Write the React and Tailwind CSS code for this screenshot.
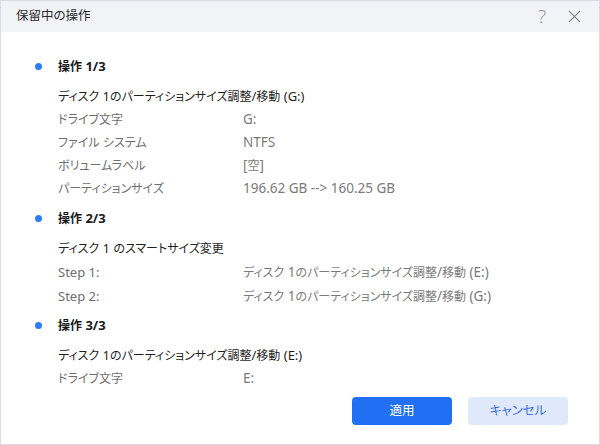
import React from "react";

const font = { fontFamily: '"Noto Sans", "Noto Sans CJK JP", sans-serif' };

function T({ children, latin = "text-[13.5px]" }) {
  const parts = String(children).split(/([\x00-\x7F]+)/).filter((p) => p !== "");
  return (
    <>
      {parts.map((p, i) =>
        /^[\x00-\x7F]+$/.test(p) ? (
          <span key={i} className={latin}>{p}</span>
        ) : (
          <span key={i}>{p}</span>
        )
      )}
    </>
  );
}

function Heading({ children }) {
  return (
    <div className="flex items-center h-[20px]">
      <span className="w-[7px] h-[7px] rounded-full bg-[#2f7cf6] ml-[34px] mr-[16px]" />
      <span className="text-[12px] font-bold text-[#1a1a1a] leading-[20px]">
        <T latin="text-[13px]">{children}</T>
      </span>
    </div>
  );
}

function Sub({ children }) {
  return (
    <div className="mt-[9px] pl-[57px] h-[23px] leading-[23px] text-[12px] text-[#1f1f1f] whitespace-nowrap">
      <T latin="text-[13px]">{children}</T>
    </div>
  );
}

function Row({ label, value }) {
  return (
    <div className="flex h-[23px] leading-[23px] text-[12px] text-[#6e6e6e]">
      <span className="pl-[57px] w-[242px] shrink-0 whitespace-nowrap"><T latin="text-[13px]">{label}</T></span>
      <span className="text-[#7a7a7a] whitespace-nowrap"><T>{value}</T></span>
    </div>
  );
}

export default function App() {
  return (
    <div style={font} className="w-[600px] h-[445px] bg-white border border-[#d8dce4] flex flex-col overflow-hidden [font-feature-settings:'palt']">
      <div className="h-[31px] bg-[#f1f3f7] flex items-center shrink-0">
        <span className="ml-[15px] text-[12.5px] text-[#2a2a2a]">保留中の操作</span>
        <span className="ml-auto text-[19px] font-light text-[#9a9a9a] leading-none mr-[22px]">?</span>
        <svg width="13" height="13" viewBox="0 0 13 13" className="mr-[18px]">
          <path d="M1 1 L12 12 M12 1 L1 12" stroke="#8a8a8a" strokeWidth="1.1" />
        </svg>
      </div>
      <div className="flex-1 overflow-hidden pt-[24px]">
        <Heading>操作 1/3</Heading>
        <Sub>ディスク 1のパーティションサイズ調整/移動 (G:)</Sub>
        <Row label="ドライブ文字" value="G:" />
        <Row label="ファイル システム" value="NTFS" />
        <Row label="ボリュームラベル" value="[空]" />
        <Row label="パーティションサイズ" value="196.62 GB --> 160.25 GB" />
        <div className="mt-[8px]" />
        <Heading>操作 2/3</Heading>
        <Sub>ディスク 1 のスマートサイズ変更</Sub>
        <div className="mt-[1px]" />
        <Row label="Step 1:" value="ディスク 1のパーティションサイズ調整/移動 (E:)" />
        <div className="mt-[1px]" />
        <Row label="Step 2:" value="ディスク 1のパーティションサイズ調整/移動 (G:)" />
        <div className="mt-[7px]" />
        <Heading>操作 3/3</Heading>
        <Sub>ディスク 1のパーティションサイズ調整/移動 (E:)</Sub>
        <Row label="ドライブ文字" value="E:" />
      </div>
      <div className="h-[54px] shrink-0 flex justify-end items-start pt-[7px] pr-[31px] gap-[16px] bg-white">
        <button className="w-[100px] h-[28px] rounded-[4px] bg-[#2170f4] text-white text-[12.5px]">適用</button>
        <button className="w-[100px] h-[28px] rounded-[4px] bg-[#e0e9fb] text-[#3b6fe0] text-[12.5px]">キャンセル</button>
      </div>
    </div>
  );
}
